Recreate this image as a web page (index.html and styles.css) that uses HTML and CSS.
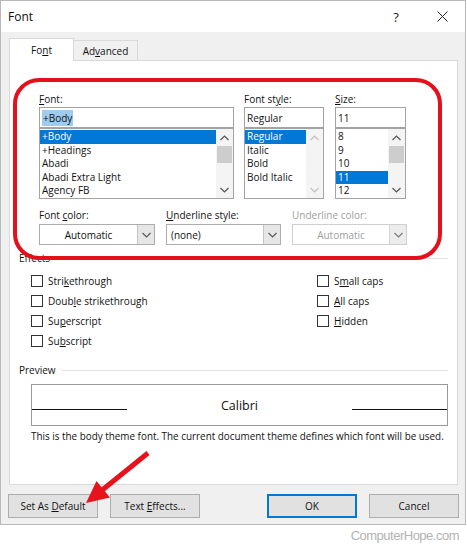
FILE: index.html
```html
<!DOCTYPE html>
<html>
<head>
<meta charset="utf-8">
<title>Font</title>
<link rel="stylesheet" href="styles.css">
</head>
<body>
<div class="dialog">
  <div class="titlebar">
    <span class="title">Font</span>
    <span class="help">?</span>
    <span class="close"><svg width="11" height="11" viewBox="0 0 11 11"><path d="M0.5 0.5 L10.5 10.5 M10.5 0.5 L0.5 10.5" stroke="#222" stroke-width="1" fill="none"/></svg></span>
  </div>
  <div class="body">
    <div class="tabs">
      <div class="tab active"><span>Fo<u>n</u>t</span></div>
      <div class="tab"><span>Ad<u>v</u>anced</span></div>
    </div>
    <div class="panel">
      <div class="fontgrid">
        <div class="col">
          <div class="lbl"><u>F</u>ont:</div>
          <div class="input"><span class="sel">+Body</span></div>
          <div class="list">
            <div class="items">
              <div class="item hi">+Body</div>
              <div class="item">+Headings</div>
              <div class="item">Abadi</div>
              <div class="item">Abadi Extra Light</div>
              <div class="item">Agency FB</div>
            </div>
            <div class="sb">
              <div class="sbbtn"><svg width="9" height="6" viewBox="0 0 9 6"><path d="M0.5 5 L4.5 1 L8.5 5" stroke="#555" stroke-width="1.2" fill="none"/></svg></div>
              <div class="track"><div class="thumb"></div></div>
              <div class="sbbtn"><svg width="9" height="6" viewBox="0 0 9 6"><path d="M0.5 1 L4.5 5 L8.5 1" stroke="#555" stroke-width="1.2" fill="none"/></svg></div>
            </div>
          </div>
        </div>
        <div class="col">
          <div class="lbl">Font st<u>y</u>le:</div>
          <div class="input">Regular</div>
          <div class="list">
            <div class="items">
              <div class="item hi">Regular</div>
              <div class="item">Italic</div>
              <div class="item">Bold</div>
              <div class="item">Bold Italic</div>
            </div>
            <div class="sb disabled">
              <div class="sbbtn"><svg width="9" height="6" viewBox="0 0 9 6"><path d="M0.5 5 L4.5 1 L8.5 5" stroke="#c2c2c2" stroke-width="1.2" fill="none"/></svg></div>
              <div class="track"></div>
              <div class="sbbtn"><svg width="9" height="6" viewBox="0 0 9 6"><path d="M0.5 1 L4.5 5 L8.5 1" stroke="#c2c2c2" stroke-width="1.2" fill="none"/></svg></div>
            </div>
          </div>
        </div>
        <div class="col col-size">
          <div class="lbl"><u>S</u>ize:</div>
          <div class="input">11</div>
          <div class="list">
            <div class="items">
              <div class="item">8</div>
              <div class="item">9</div>
              <div class="item">10</div>
              <div class="item hi">11</div>
              <div class="item">12</div>
            </div>
            <div class="sb">
              <div class="sbbtn"><svg width="9" height="6" viewBox="0 0 9 6"><path d="M0.5 5 L4.5 1 L8.5 5" stroke="#555" stroke-width="1.2" fill="none"/></svg></div>
              <div class="track"><div class="thumb"></div></div>
              <div class="sbbtn"><svg width="9" height="6" viewBox="0 0 9 6"><path d="M0.5 1 L4.5 5 L8.5 1" stroke="#555" stroke-width="1.2" fill="none"/></svg></div>
            </div>
          </div>
        </div>
      </div>

      <div class="row2">
        <div class="col">
          <div class="lbl">Font <u>c</u>olor:</div>
          <div class="dd">
            <div class="ddtext center">Automatic</div>
            <div class="ddbtn"><svg width="9" height="6" viewBox="0 0 9 6"><path d="M0.5 1 L4.5 5 L8.5 1" stroke="#555" stroke-width="1.1" fill="none"/></svg></div>
          </div>
        </div>
        <div class="col">
          <div class="lbl"><u>U</u>nderline style:</div>
          <div class="dd">
            <div class="ddtext">(none)</div>
            <div class="ddbtn"><svg width="9" height="6" viewBox="0 0 9 6"><path d="M0.5 1 L4.5 5 L8.5 1" stroke="#555" stroke-width="1.1" fill="none"/></svg></div>
          </div>
        </div>
        <div class="col">
          <div class="lbl dim">Underline color:</div>
          <div class="dd off">
            <div class="ddtext center">Automatic</div>
            <div class="ddbtn"><svg width="9" height="6" viewBox="0 0 9 6"><path d="M0.5 1 L4.5 5 L8.5 1" stroke="#777" stroke-width="1.1" fill="none"/></svg></div>
          </div>
        </div>
      </div>

      <div class="grouphdr fx-hdr">Effects</div>
      <div class="effects">
        <div class="fxcol left">
          <div class="cb"><span class="box"></span><span>Stri<u>k</u>ethrough</span></div>
          <div class="cb"><span class="box"></span><span>Doub<u>l</u>e strikethrough</span></div>
          <div class="cb"><span class="box"></span><span>Su<u>p</u>erscript</span></div>
          <div class="cb"><span class="box"></span><span>Su<u>b</u>script</span></div>
        </div>
        <div class="fxcol">
          <div class="cb"><span class="box"></span><span>S<u>m</u>all caps</span></div>
          <div class="cb"><span class="box"></span><span><u>A</u>ll caps</span></div>
          <div class="cb"><span class="box"></span><span><u>H</u>idden</span></div>
        </div>
      </div>

      <div class="grouphdr pv-hdr">Preview</div>
      <div class="preview">
        <span class="pline"></span>
        <span class="pvtext">Calibri</span>
        <span class="pline"></span>
      </div>
      <div class="desc">This is the body theme font. The current document theme defines which font will be used.</div>

      <div class="redbox"></div>
    </div>
    <div class="buttons">
      <div class="btngroup">
        <div class="btn"><span>Set As <u>D</u>efault</span></div>
        <div class="btn"><span>Text <u>E</u>ffects...</span></div>
      </div>
      <div class="btngroup">
        <div class="btn ok"><span>OK</span></div>
        <div class="btn"><span>Cancel</span></div>
      </div>
    </div>
  </div>
</div>
<div class="wm">ComputerHope.com</div>
<svg class="annot" width="467" height="546" viewBox="0 0 467 546">
  <line x1="148" y1="453" x2="101" y2="491" stroke="#e8121c" stroke-width="5"/>
  <polygon points="86,503 96.5,481 110,497.5" fill="#e8121c"/>
</svg>
</body>
</html>
```
FILE: styles.css
```css
* { box-sizing: border-box; }
body {
  margin: 0;
  background: #fff;
  font-family: "Open Sans", "Noto Sans", sans-serif;
  font-size: 10px;
  color: #111;
}
u { text-decoration-thickness: 1px; text-underline-offset: 1px; }

.dialog {
  position: relative;
  width: 466px;
  height: 525px;
  border: 1px solid #b8b8b8;
  background: #f0f0f0;
  display: flex;
  flex-direction: column;
}
.titlebar {
  flex: none;
  height: 31px;
  background: #fff;
  display: flex;
  align-items: center;
}
.title { padding-left: 7px; font-size: 12px; color: #111; }
.help { margin-left: auto; width: 46px; text-align: center; font-size: 13px; color: #222; }
.close { width: 46px; height: 31px; display: flex; align-items: center; justify-content: center; }

.body {
  flex: 1;
  padding: 6px 7px 6px 8px;
  display: flex;
  flex-direction: column;
}
.tabs { height: 22px; display: flex; align-items: flex-end; flex: none; }
.tab {
  width: 64px;
  height: 20px;
  border-top: 1px solid #d9d9d9;
  border-right: 1px solid #d9d9d9;
  display: flex;
  align-items: center;
  justify-content: center;
  background: #f0f0f0;
}
.tab.active {
  width: 65px;
  height: 23px;
  border: 1px solid #d9d9d9;
  border-bottom: none;
  background: #fff;
  margin-bottom: -1px;
  position: relative;
  z-index: 2;
}
.panel {
  flex: none;
  position: relative;
  height: 425px;
  border: 1px solid #d9d9d9;
  background: #fff;
  padding: 0 9px;
}

.lbl { height: 16px; line-height: 16px; white-space: nowrap; }
.lbl.dim { color: #a0a0a0; }

.fontgrid {
  margin-left: 20px;
  padding-top: 30px;
  display: grid;
  grid-template-columns: 195px 80px 72px;
  column-gap: 10px;
}
.col-size { margin-left: 1px; }
.input {
  height: 21px;
  border: 1px solid #a3a3a3;
  padding-left: 2px;
  display: flex;
  align-items: center;
  background: #fff;
}
.sel { background: #9fcbef; padding: 0 1px; line-height: 16px; }
.list {
  height: 71px;
  border: 1px solid #a3a3a3;
  display: flex;
  background: #fff;
}
.items { flex: 1; padding-top: 1px; min-width: 0; }
.item { height: 13.6px; line-height: 13.6px; padding-left: 2px; white-space: nowrap; }
.item.hi { background: #0078d7; color: #fff; }
.sb { width: 17px; display: flex; flex-direction: column; background: #f4f4f4; flex: none; }
.sbbtn { height: 17px; display: flex; align-items: center; justify-content: center; flex: none; }
.track { flex: 1; }
.thumb { height: 17px; background: #cdcdcd; margin: 0 1px; }

.row2 {
  margin: 8px 0 0 20px;
  display: grid;
  grid-template-columns: 116px 115px 115px;
  column-gap: 11px;
}
.row2 .lbl { margin-bottom: 1px; }
.dd {
  height: 21px;
  border: 1px solid #adadad;
  display: flex;
  background: #fff;
}
.ddtext { flex: 1; display: flex; align-items: center; padding-left: 4px; }
.ddtext.center { justify-content: center; padding-left: 0; }
.ddbtn {
  width: 17px;
  border-left: 1px solid #c4c4c4;
  background: #e6e6e6;
  display: flex;
  align-items: center;
  justify-content: center;
}
.dd.off { border-color: #cfcfcf; color: #a0a0a0; }
.dd.off .ddbtn { background: #ececec; border-left-color: #d4d4d4; }

.grouphdr { display: flex; align-items: center; height: 16px; white-space: nowrap; }
.grouphdr::after { content: ""; flex: 1; border-top: 1px solid #e0e0e0; margin-left: 6px; }
.fx-hdr { margin-top: 5px; }
.pv-hdr { margin-top: 11px; }

.effects { margin-top: 5px; padding-left: 12px; display: flex; }
.fxcol.left { width: 286px; }
.cb { height: 20px; display: flex; align-items: center; white-space: nowrap; }
.box { width: 12px; height: 12px; border: 1px solid #333; background: #fff; margin-right: 5px; flex: none; }

.preview {
  margin: 6px 0 0 12px;
  height: 42px;
  border: 1px solid #9a9a9a;
  display: flex;
  align-items: center;
}
.pline { width: 95px; height: 1px; background: #111; margin-top: 9px; flex: none; }
.pvtext { flex: 1; text-align: center; font-family: "Open Sans", "Noto Sans", sans-serif; font-size: 12.5px; font-weight: 400; color: #111; }
.desc { margin-top: 3px; padding-left: 12px; line-height: 14px; white-space: nowrap; font-size: 9.9px; }

.redbox {
  position: absolute;
  left: 3px;
  top: 17px;
  width: 429px;
  height: 182px;
  border: 4px solid #e4101b;
  border-radius: 26px;
  pointer-events: none;
}

.buttons {
  margin: 9px -1px 0 -1px;
  display: flex;
  justify-content: space-between;
}
.btngroup { display: flex; gap: 12px; }
.btn {
  width: 90px;
  height: 24px;
  border: 1px solid #adadad;
  background: #e1e1e1;
  display: flex;
  align-items: center;
  justify-content: center;
  white-space: nowrap;
}
.btn.ok { border-color: #0078d7; box-shadow: inset 0 0 0 1px #0078d7; }

.wm {
  margin-top: 3px;
  padding-right: 8px;
  text-align: right;
  line-height: 16px;
  font-family: "Liberation Sans", Arial, sans-serif;
  font-size: 13px;
  letter-spacing: -0.5px;
  color: #b3b3b3;
}
.annot { position: absolute; left: 0; top: 0; pointer-events: none; }
```
